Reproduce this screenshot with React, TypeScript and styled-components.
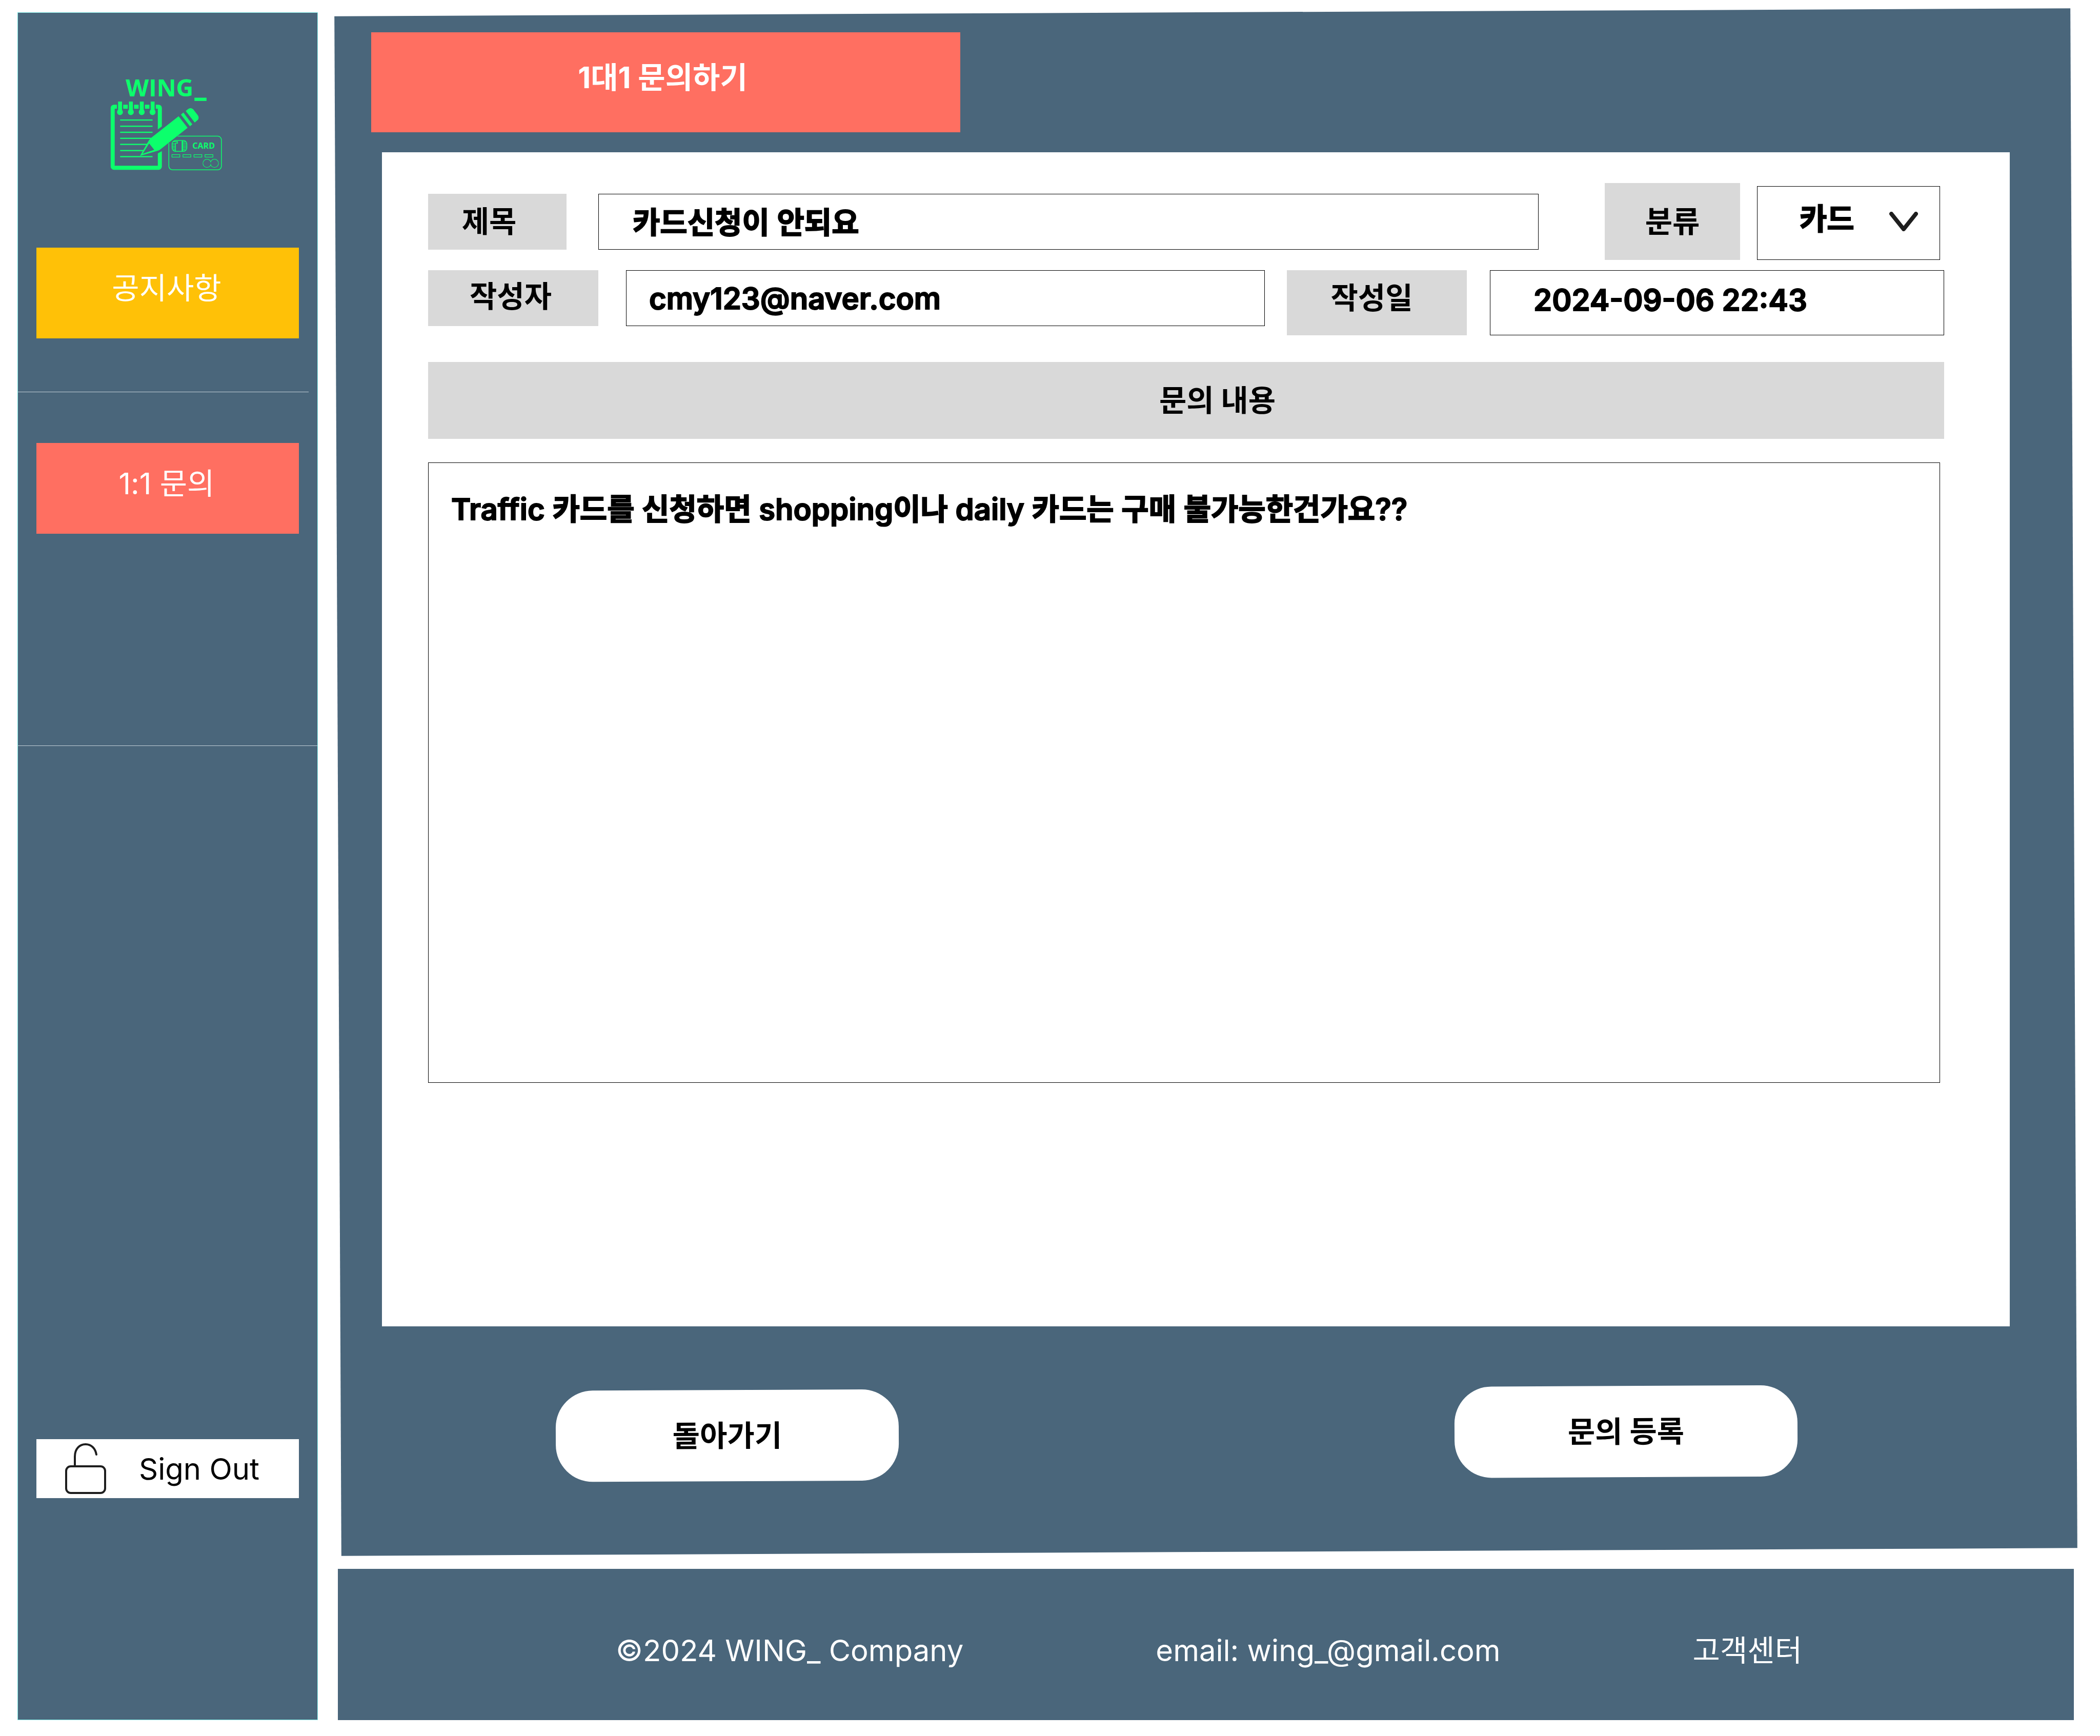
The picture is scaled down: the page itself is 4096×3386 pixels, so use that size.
import React from "react";
import styled, { createGlobalStyle } from "styled-components";

const color = {
  slate: "#4a667b",
  coral: "#ff6f61",
  amber: "#ffc107",
  grey: "#d9d9d9",
  green: "#0cff6c",
  ink: "#000000",
  white: "#ffffff",
};

const GlobalStyle = createGlobalStyle`
  *, *::before, *::after { box-sizing: border-box; }
  body { margin: 0; background: ${color.white}; }
  body, button, input, select, textarea {
    font-family: Inter, "Noto Sans CJK KR", sans-serif;
    font-size: 58px;
    line-height: 70px;
  }
`;

const Page = styled.div`
  display: grid;
  grid-template-columns: 586px minmax(0, 1fr);
  column-gap: 39px;
  padding: 24px 51px 31px 34px;
`;

const Sidebar = styled.aside`
  display: flex;
  flex-direction: column;
  align-items: center;
  padding: 102px 0 432px;
  background: ${color.slate};
  border: 1px solid #7fe9e4;
`;

const LogoArt = styled.svg`
  width: 291px;
  height: 236px;
  margin-bottom: 120px;
`;

const Menu = styled.nav`
  display: flex;
  flex-direction: column;
  align-items: center;
  width: 100%;
`;

const MenuLink = styled.a<{ $fill: string }>`
  display: flex;
  align-items: center;
  justify-content: center;
  width: 512px;
  height: 177px;
  padding: 0 4px 20px 0;
  background: ${(p) => p.$fill};
  color: ${color.white};
  text-decoration: none;
`;

const Divider = styled.hr<{ $above: number; $below: number; $inset: number }>`
  align-self: stretch;
  height: 1px;
  margin: ${(p) => p.$above}px ${(p) => p.$inset}px ${(p) => p.$below}px 0;
  border: 0;
  background: #c3ced6;
`;

const SignOut = styled.button`
  display: flex;
  align-items: center;
  gap: 64px;
  width: 512px;
  height: 115px;
  margin-top: auto;
  padding: 0 0 0 56px;
  border: 0;
  background: ${color.white};
  color: ${color.ink};
`;

const LockArt = styled.svg`
  width: 80px;
  height: 99px;
`;

const Column = styled.div`
  display: flex;
  flex-direction: column;
  gap: 33px;
`;

const Main = styled.main`
  position: relative;
  isolation: isolate;
  padding: 39px 125px 142px 86px;

  &::before {
    content: "";
    position: absolute;
    inset: 0;
    z-index: -1;
    background: ${color.slate};
    transform: rotate(-0.26deg);
  }
`;

const Title = styled.h1`
  display: flex;
  align-items: center;
  justify-content: center;
  width: 1149px;
  height: 195px;
  margin: 0 0 39px -21px;
  padding: 0 12px 20px 0;
  background: ${color.coral};
  color: ${color.white};
  font-size: 58px;
  font-weight: 700;
`;

const Card = styled.form`
  display: flex;
  flex-direction: column;
  padding: 60px 128px 475px 90px;
  background: ${color.white};
`;

const SubjectRow = styled.div`
  display: flex;
  align-items: center;
  margin-bottom: 20px;
  padding-right: 8px;
`;

const AuthorRow = styled.div`
  display: flex;
  align-items: flex-start;
`;

const Tag = styled.label<{ $w: number; $h: number; $gap: number; $pad?: string }>`
  display: flex;
  flex: none;
  align-items: center;
  justify-content: center;
  width: ${(p) => p.$w}px;
  height: ${(p) => p.$h}px;
  margin-right: ${(p) => p.$gap}px;
  padding: ${(p) => p.$pad ?? "0"};
  background: ${color.grey};
  color: ${color.ink};
  font-weight: 700;
`;

const Field = styled.input<{ $flex: string; $h: number; $gap?: number; $pad: string }>`
  flex: ${(p) => p.$flex};
  min-width: 0;
  height: ${(p) => p.$h}px;
  margin: 0 ${(p) => p.$gap ?? 0}px 0 0;
  padding: ${(p) => p.$pad};
  border: 1px solid ${color.ink};
  background: ${color.white};
  color: ${color.ink};
  font-weight: 600;
  -webkit-text-stroke: 2px ${color.ink};
`;

const SelectBox = styled.div`
  position: relative;
  flex: none;
  align-self: flex-end;
  width: 357px;
  height: 144px;
`;

const Select = styled.select`
  width: 100%;
  height: 100%;
  padding: 0 120px 16px 82px;
  border: 1px solid ${color.ink};
  border-radius: 0;
  appearance: none;
  background: ${color.white};
  color: ${color.ink};
  font-weight: 600;
  -webkit-text-stroke: 2px ${color.ink};
`;

const Chevron = styled.svg`
  position: absolute;
  top: 50px;
  right: 43px;
  width: 56px;
  height: 38px;
  pointer-events: none;
`;

const BodyLabel = styled.label`
  display: flex;
  align-items: center;
  justify-content: center;
  height: 150px;
  margin: 52px 0 46px;
  padding-left: 122px;
  background: ${color.grey};
  color: ${color.ink};
  font-weight: 700;
`;

const Body = styled.textarea`
  height: 1210px;
  margin: 0 8px 0 0;
  padding: 55px 44px;
  border: 1px solid ${color.ink};
  background: ${color.white};
  color: ${color.ink};
  font-weight: 600;
  -webkit-text-stroke: 2px ${color.ink};
  resize: none;
`;

const Actions = styled.div`
  display: flex;
  justify-content: space-between;
  margin-top: 120px;
  padding: 0 414px 0 339px;
  transform: rotate(-0.26deg);
`;

const Action = styled.button`
  width: 669px;
  height: 178px;
  padding: 0;
  border: 0;
  border-radius: 72px;
  background: ${color.white};
  color: ${color.ink};
  font-weight: 700;
`;

const Footer = styled.footer`
  display: flex;
  align-items: center;
  gap: 375px;
  height: 295px;
  padding: 22px 0 0 542px;
  background: ${color.slate};
  color: ${color.white};
  white-space: nowrap;
`;

const FooterLink = styled.a`
  color: inherit;
  text-decoration: none;
`;

function Logo() {
  const rings = [171, 241, 311, 381];
  const rules = [
    [354, 381],
    [394, 381],
    [433, 381],
    [472, 372],
    [511, 352],
    [551, 330],
    [590, 381],
  ];
  return (
    <LogoArt viewBox="0 0 960 780" role="img" aria-label="WING_ CARD" fill={color.green}>
      <text x="208" y="203" fontFamily="Open Sans, sans-serif" fontWeight="700" fontSize="154">
        WING
      </text>
      <rect x="651" y="210" width="78" height="21" />
      <rect x="124" y="268" width="304" height="394" rx="8" fill="none" stroke={color.green} strokeWidth="26" />
      {rings.map((x) => (
        <g key={x}>
          <rect x={x - 20} y="240" width="41" height="50" fill={color.slate} />
          <rect x={x - 12} y="235" width="25" height="62" />
          <circle cx={x} cy="303" r="19" />
        </g>
      ))}
      {rules.map(([y, end]) => (
        <rect key={y} x="172" y={y - 4} width={end - 172} height="8" />
      ))}
      <rect x="486" y="458" width="339" height="217" rx="24" fill="none" stroke={color.green} strokeWidth="5" />
      <path d="M410 418L446 392V552L410 572ZM478 450H552L478 510Z" fill={color.slate} />
      <path d="M368 472L549 330L607 404L432 543Q424 550 412 553L300 585L358 484Z" />
      <path d="M317 572L359 505L392 546Z" fill={color.slate} />
      <path d="M564 319L580 306L637 382L622 394Z" />
      <path d="M595 296L608 285Q626 270 643 285L672 322Q684 339 673 353L653 370Z" />
      <g fill="none" stroke={color.green} strokeWidth="5">
        <rect x="507" y="486" width="95" height="70" rx="22" />
        <path d="M529 503V555M575 488V555M571 488V555M529 503H542V493H514M507 508H529M507 522H527M507 534H527M512 546H527M577 496H596M577 508H601M577 521H601M577 534H601M577 546H596" />
      </g>
      <g fill="none" stroke={color.green} strokeWidth="4">
        {[506, 577, 648, 719].map((x) => (
          <rect key={x} x={x} y="577" width="51" height="16" />
        ))}
        <circle cx="732" cy="633" r="26" />
        <circle cx="780" cy="633" r="26" />
      </g>
      <circle cx="732" cy="633" r="24" fill={color.slate} />
      <circle cx="780" cy="633" r="24" fill={color.slate} />
      <text x="638" y="538" fontFamily="Open Sans, sans-serif" fontWeight="700" fontSize="53">
        CARD
      </text>
    </LogoArt>
  );
}

function Lock() {
  return (
    <LockArt viewBox="0 0 80 99" fill="none" stroke="#1e1e1e" strokeWidth="4" strokeLinecap="round" aria-hidden="true">
      <rect x="2" y="45" width="76" height="52" rx="9" />
      <path d="M19 44V26C19 11 28 2 40 2C51 2 59 10 61 22" />
    </LockArt>
  );
}

export default function App() {
  return (
    <>
      <GlobalStyle />
      <Page>
        <Sidebar>
          <Logo />
          <Menu>
            <MenuLink href="#notice" $fill={color.amber}>
              공지사항
            </MenuLink>
            <Divider $above={104} $below={99} $inset={17} />
            <MenuLink href="#inquiry" $fill={color.coral}>
              1:1 문의
            </MenuLink>
            <Divider $above={413} $below={0} $inset={0} />
          </Menu>
          <SignOut type="button">
            <Lock />
            Sign Out
          </SignOut>
        </Sidebar>

        <Column>
          <Main>
            <Title>1대1 문의하기</Title>
            <Card id="inquiry-form">
              <SubjectRow>
                <Tag htmlFor="subject" $w={270} $h={109} $gap={62} $pad="0 32px 0 0">
                  제목
                </Tag>
                <Field id="subject" $flex="1 1 0" $h={109} $gap={129} $pad="0 0 4px 66px" defaultValue="카드신청이 안되요" />
                <Tag htmlFor="category" $w={264} $h={150} $gap={33}>
                  분류
                </Tag>
                <SelectBox>
                  <Select id="category" defaultValue="card">
                    <option value="card">카드</option>
                  </Select>
                  <Chevron viewBox="0 0 56 38" fill="none" stroke="#1e1e1e" strokeWidth="8" strokeLinecap="round" strokeLinejoin="round" aria-hidden="true">
                    <path d="M4 4L28 34L52 4" />
                  </Chevron>
                </SelectBox>
              </SubjectRow>
              <AuthorRow>
                <Tag htmlFor="author" $w={332} $h={109} $gap={54} $pad="0 10px 8px 0">
                  작성자
                </Tag>
                <Field id="author" $flex="1 1 0" $h={109} $gap={43} $pad="0 0 0 44px" defaultValue="cmy123@naver.com" />
                <Tag htmlFor="date" $w={351} $h={127} $gap={45} $pad="0 20px 20px 0">
                  작성일
                </Tag>
                <Field id="date" $flex="0 0 886px" $h={127} $pad="0 0 12px 84px" defaultValue="2024-09-06 22:43" />
              </AuthorRow>
              <BodyLabel htmlFor="body">문의 내용</BodyLabel>
              <Body
                id="body"
                defaultValue="Traffic 카드를 신청하면 shopping이나 daily 카드는 구매 불가능한건가요??"
              />
            </Card>
            <Actions>
              <Action type="button">돌아가기</Action>
              <Action type="submit" form="inquiry-form">
                문의 등록
              </Action>
            </Actions>
          </Main>
          <Footer>
            <span>©2024 WING_ Company</span>
            <span>email: wing_@gmail.com</span>
            <FooterLink href="#support">고객센터</FooterLink>
          </Footer>
        </Column>
      </Page>
    </>
  );
}
